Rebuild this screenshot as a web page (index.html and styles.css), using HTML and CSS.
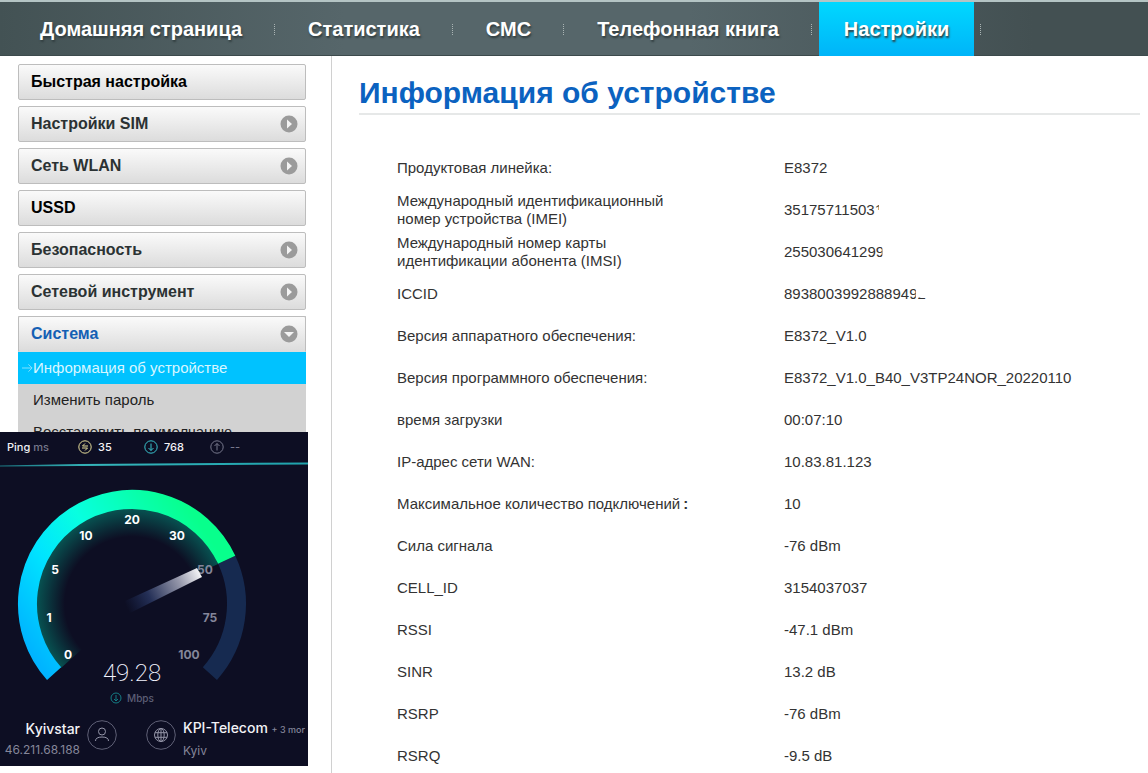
FILE: index.html
```html
<!DOCTYPE html>
<html lang="ru">
<head>
<meta charset="utf-8">
<title>Информация об устройстве</title>
<link rel="stylesheet" href="styles.css">
</head>
<body>
<nav class="topnav">
  <a class="tab" href="#">Домашняя страница</a>
  <a class="tab" href="#">Статистика</a>
  <a class="tab" href="#">СМС</a>
  <a class="tab" href="#">Телефонная книга</a>
  <a class="tab tab-active" href="#"><span class="tab-box">Настройки</span></a>
</nav>
<div class="layout">
  <aside class="sidebar">
    <button class="item item-plain">Быстрая настройка</button>
    <button class="item">Настройки SIM<svg class="arrow" viewBox="0 0 18 18"><circle cx="9" cy="9" r="8.500"/><path d="M7 4.500l5 4.500-5 4.500z"/></svg></button>
    <button class="item">Сеть WLAN<svg class="arrow" viewBox="0 0 18 18"><circle cx="9" cy="9" r="8.500"/><path d="M7 4.500l5 4.500-5 4.500z"/></svg></button>
    <button class="item item-plain">USSD</button>
    <button class="item">Безопасность<svg class="arrow" viewBox="0 0 18 18"><circle cx="9" cy="9" r="8.500"/><path d="M7 4.500l5 4.500-5 4.500z"/></svg></button>
    <button class="item">Сетевой инструмент<svg class="arrow" viewBox="0 0 18 18"><circle cx="9" cy="9" r="8.500"/><path d="M7 4.500l5 4.500-5 4.500z"/></svg></button>
    <div class="group">
      <button class="item item-open">Система<svg class="arrow" viewBox="0 0 18 18"><circle cx="9" cy="9" r="8.500"/><path d="M4 7h10l-5 5z"/></svg></button>
      <a class="sub sub-active" href="#"><svg class="mark" viewBox="0 0 12 10"><path d="M0 5h11M7 1l4 4-4 4"/></svg>Информация об устройстве</a>
      <a class="sub" href="#">Изменить пароль</a>
      <a class="sub" href="#">Восстановить по умолчанию</a>
    </div>
  </aside>
  <main class="content">
    <h1 class="title">Информация об устройстве</h1>
    <table class="info">
      <tr><th scope="row">Продуктовая линейка:</th><td>E8372</td></tr>
      <tr><th scope="row">Международный идентификационный номер устройства (IMEI)</th><td>35175711503<span class="cut-corner">1</span></td></tr>
      <tr><th scope="row">Международный номер карты идентификации абонента (IMSI)</th><td>25503064129<span class="cut-side">9</span></td></tr>
      <tr><th scope="row">ICCID</th><td>893800399288894<span class="cut-side">9</span><span class="cut-top">2</span></td></tr>
      <tr><th scope="row">Версия аппаратного обеспечения:</th><td>E8372_V1.0</td></tr>
      <tr><th scope="row">Версия программного обеспечения:</th><td>E8372_V1.0_B40_V3TP24NOR_20220110</td></tr>
      <tr><th scope="row">время загрузки</th><td>00:07:10</td></tr>
      <tr><th scope="row">IP-адрес сети WAN:</th><td>10.83.81.123</td></tr>
      <tr><th scope="row">Максимальное количество подключений<span class="colon">:</span></th><td>10</td></tr>
      <tr><th scope="row">Сила сигнала</th><td>-76 dBm</td></tr>
      <tr><th scope="row">CELL_ID</th><td>3154037037</td></tr>
      <tr><th scope="row">RSSI</th><td>-47.1 dBm</td></tr>
      <tr><th scope="row">SINR</th><td>13.2 dB</td></tr>
      <tr><th scope="row">RSRP</th><td>-76 dBm</td></tr>
      <tr><th scope="row">RSRQ</th><td>-9.5 dB</td></tr>
    </table>
  </main>
</div>

<section class="speed">
  <div class="pings">
    <span class="ping">Ping <span class="dim">ms</span></span>
    <span class="stat"><svg class="stat-icon yellow" viewBox="0 0 14 14"><circle cx="7" cy="7" r="6.200"/><path d="M10 6H4.500L7 3.500M4 8h5.500L7 10.500"/></svg>35</span>
    <span class="stat"><svg class="stat-icon teal" viewBox="0 0 14 14"><circle cx="7" cy="7" r="6.200"/><path d="M7 3.500v7M4.500 8L7 10.500 9.500 8"/></svg>768</span>
    <span class="stat dim"><svg class="stat-icon" viewBox="0 0 14 14"><circle cx="7" cy="7" r="6.200"/><path d="M7 10.500v-7M4.500 6L7 3.500 9.500 6"/></svg>--</span>
  </div>
  <svg class="gauge" viewBox="0 462 308 250">
    <defs>
      <linearGradient id="arc" gradientUnits="userSpaceOnUse" x1="50" y1="680" x2="225" y2="560">
        <stop offset="0" stop-color="#00b4ff"/><stop offset=".3" stop-color="#00e4ff"/><stop offset=".55" stop-color="#08ffe0"/><stop offset="1" stop-color="#08ff8c"/>
      </linearGradient>
      <radialGradient id="glow" gradientUnits="userSpaceOnUse" cx="132" cy="604" r="96">
        <stop offset=".7" stop-color="#00a98c" stop-opacity="0"/><stop offset="1" stop-color="#00a98c" stop-opacity=".45"/>
      </radialGradient>
      <linearGradient id="needle" gradientUnits="userSpaceOnUse" x1="127" y1="608" x2="202" y2="571">
        <stop offset="0" stop-color="#1c2a55" stop-opacity="0"/><stop offset=".3" stop-color="#253057"/><stop offset=".7" stop-color="#9698ab"/><stop offset="1" stop-color="#fff"/>
      </linearGradient>
      <linearGradient id="trace"><stop offset="0" stop-color="#1b7580"/><stop offset=".3" stop-color="#35b5ba"/><stop offset="1" stop-color="#1fa2ac"/></linearGradient>
    </defs>
    <path d="M0 465.500L80 464 308 462.500V464.500L80 466 0 466.500z" fill="url(#trace)"/>
    <path d="M132 604L61 668A95.500 95.500 0 1 1 218 564z" fill="url(#glow)"/>
    <path d="M226.700 559.800A104.500 104.500 0 0 1 209.900 673.600" fill="none" stroke="#162a50" stroke-width="19"/>
    <path d="M54.100 673.600A104.500 104.500 0 1 1 226.700 559.800" fill="none" stroke="url(#arc)" stroke-width="19"/>
    <g class="ticks">
      <text x="68" y="659">0</text><text x="49" y="622">1</text><text x="55" y="574">5</text><text x="86" y="540">10</text><text x="132" y="524">20</text><text x="177" y="540">30</text>
      <text class="off" x="205" y="574">50</text><text class="off" x="210" y="622">75</text><text class="off" x="189" y="659">100</text>
    </g>
    <path d="M125 601L197 568 202 577 128 614z" fill="url(#needle)"/>
    <text class="value" x="132" y="681">49.28</text>
    <g fill="none" stroke="#147d85"><circle cx="116" cy="698" r="5"/><path d="M116 695v6M114 699l2 2 2-2"/></g>
    <text class="unit" x="127" y="702">Mbps</text>
  </svg>
  <div class="ends">
    <div class="end end-left"><span class="name">Kyivstar</span><span class="detail">46.211.68.188</span></div>
    <svg class="badge" viewBox="0 0 30 30"><circle cx="15" cy="15" r="14.300" stroke="#5f6076"/><circle cx="15" cy="11.500" r="3.500"/><path d="M8.500 21q0-4 6.500-4t6.500 4"/></svg>
    <svg class="badge badge-server" viewBox="0 0 30 30"><circle cx="15" cy="15" r="14.300" stroke="#5f6076"/><circle cx="15" cy="15" r="6.500"/><ellipse cx="15" cy="15" rx="3.200" ry="6.500"/><path d="M15 8.500v13M9 12.700h12M9 17.300h12"/></svg>
    <div class="end"><span class="name">KPI-Telecom <span class="more">+ 3 mor</span></span><span class="detail">Kyiv</span></div>
  </div>
</section>
</body>
</html>
```
FILE: styles.css
```css
* { box-sizing: border-box; }
body {
  margin: 0;
  height: 100vh;
  overflow: hidden;
  position: relative;
  background: #fff;
  color: #333;
  font: 15px/18px "Liberation Sans", Arial, sans-serif;
}
a { color: inherit; text-decoration: none; }

.topnav {
  display: flex;
  height: 56px;
  padding-left: 7px;
  border-top: 2px solid #b4c4c4;
  border-bottom: 1px solid #3c4a4c;
  background: linear-gradient(90deg, #435254, #56666a 30%, #56666a 60%, #435052 90%);
  color: #fff;
  font-size: 20px;
  font-weight: bold;
  line-height: 54px;
  text-shadow: 1px 2px 2px #303c3e;
}
.tab {
  position: relative;
  padding: 0 33px;
  white-space: nowrap;
}
.tab::after {
  content: "";
  position: absolute;
  right: 0;
  top: 22px;
  height: 11px;
  border-right: 1px dotted #aab4b4;
}
.tab-active { padding: 0 7px; }
.tab-box {
  display: block;
  height: 54px;
  padding: 0 25px;
  background: linear-gradient(#00d8ff, #00b4f8);
}

.layout { display: flex; }
.sidebar {
  display: flex;
  flex-direction: column;
  gap: 6px;
  width: 332px;
  height: 717px;
  padding: 8px 25px 0 18px;
  border-right: 1px solid #d0d0d0;
}
.item {
  display: flex;
  flex-shrink: 0;
  align-items: center;
  justify-content: space-between;
  width: 100%;
  height: 36px;
  padding: 0 7px 0 12px;
  border: 1px solid #bdbdbd;
  border-radius: 2px;
  background: linear-gradient(#fafafa, #dcdcdc);
  color: #2b3233;
  font: bold 16px/20px "Liberation Sans", Arial, sans-serif;
}
.item-plain { color: #000; }
.item-open { border-bottom-color: #d8dede; color: #1460b4; }
.arrow { width: 18px; height: 18px; }
.arrow circle { fill: #9b9b9b; }
.arrow path { fill: #f4f4f4; }
.group { background: #d2d2d2; }
.sub {
  display: flex;
  align-items: center;
  height: 32px;
  padding-left: 15px;
  color: #222;
  font-size: 15px;
}
.sub-active {
  padding-left: 4px;
  background: #00c2ff;
  color: #d8f6ff;
}
.mark { width: 11px; height: 10px; fill: none; stroke: #8ce4ff; }

.content { flex: 1; padding: 20px 8px 0 27px; }
.title {
  margin: 0 0 32px;
  padding-bottom: 3px;
  border-bottom: 2px solid #e6e8e8;
  color: #0b62c0;
  font-size: 30px;
  line-height: 34px;
}
.info {
  width: 100%;
  border-collapse: collapse;
}
.info tr { height: 42px; }
.info th {
  width: 425px;
  padding: 0 88px 0 38px;
  font-weight: normal;
  text-align: left;
}
.info td { padding: 0; }
.colon { margin-left: 3px; font-weight: bold; }
.cut-corner { display: inline-block; clip-path: inset(0 50% 50% 0); }
.cut-side { display: inline-block; clip-path: inset(0 20% 0 0); }
.cut-top { display: inline-block; clip-path: inset(70% 0 0 0); }

.speed {
  position: absolute;
  left: 0;
  top: 432px;
  width: 308px;
  overflow: hidden;
  background: #0d0e23;
  color: #f2f2f6;
  font-family: Inter, "Open Sans", sans-serif;
}
.pings {
  display: flex;
  align-items: center;
  height: 30px;
  padding-left: 7px;
  font-size: 11px;
  font-weight: 500;
}
.ping { width: 71px; }
.dim { color: #77788c; }
.stat { display: flex; align-items: center; gap: 6px; width: 66px; }
.stat-icon { width: 14px; height: 14px; fill: none; stroke: currentColor; }
.yellow { color: #e5dc9a; }
.teal { color: #39c3cd; }
.gauge { display: block; width: 100%; }
.ticks { fill: #fff; font-size: 12px; font-weight: 700; text-anchor: middle; }
.off { fill: #84869a; }
.value { fill: #f4f4ff; font: 200 24px Roboto, sans-serif; text-anchor: middle; }
.unit { fill: #5d5f76; font-size: 10px; font-weight: 500; }
.ends { display: flex; align-items: center; gap: 7px; height: 54px; padding-bottom: 8px; }
.end { display: flex; flex-direction: column; flex-shrink: 0; padding-top: 8px; line-height: 21px; white-space: nowrap; }
.end-left { width: 80px; align-items: flex-end; }
.name { font-size: 14px; font-weight: 500; }
.detail { color: #85869a; font-size: 12px; }
.more { color: #85869a; font-size: 9px; }
.badge { flex-shrink: 0; width: 30px; height: 30px; fill: none; stroke: #9495a8; }
.badge-server { margin-left: 22px; }
```
